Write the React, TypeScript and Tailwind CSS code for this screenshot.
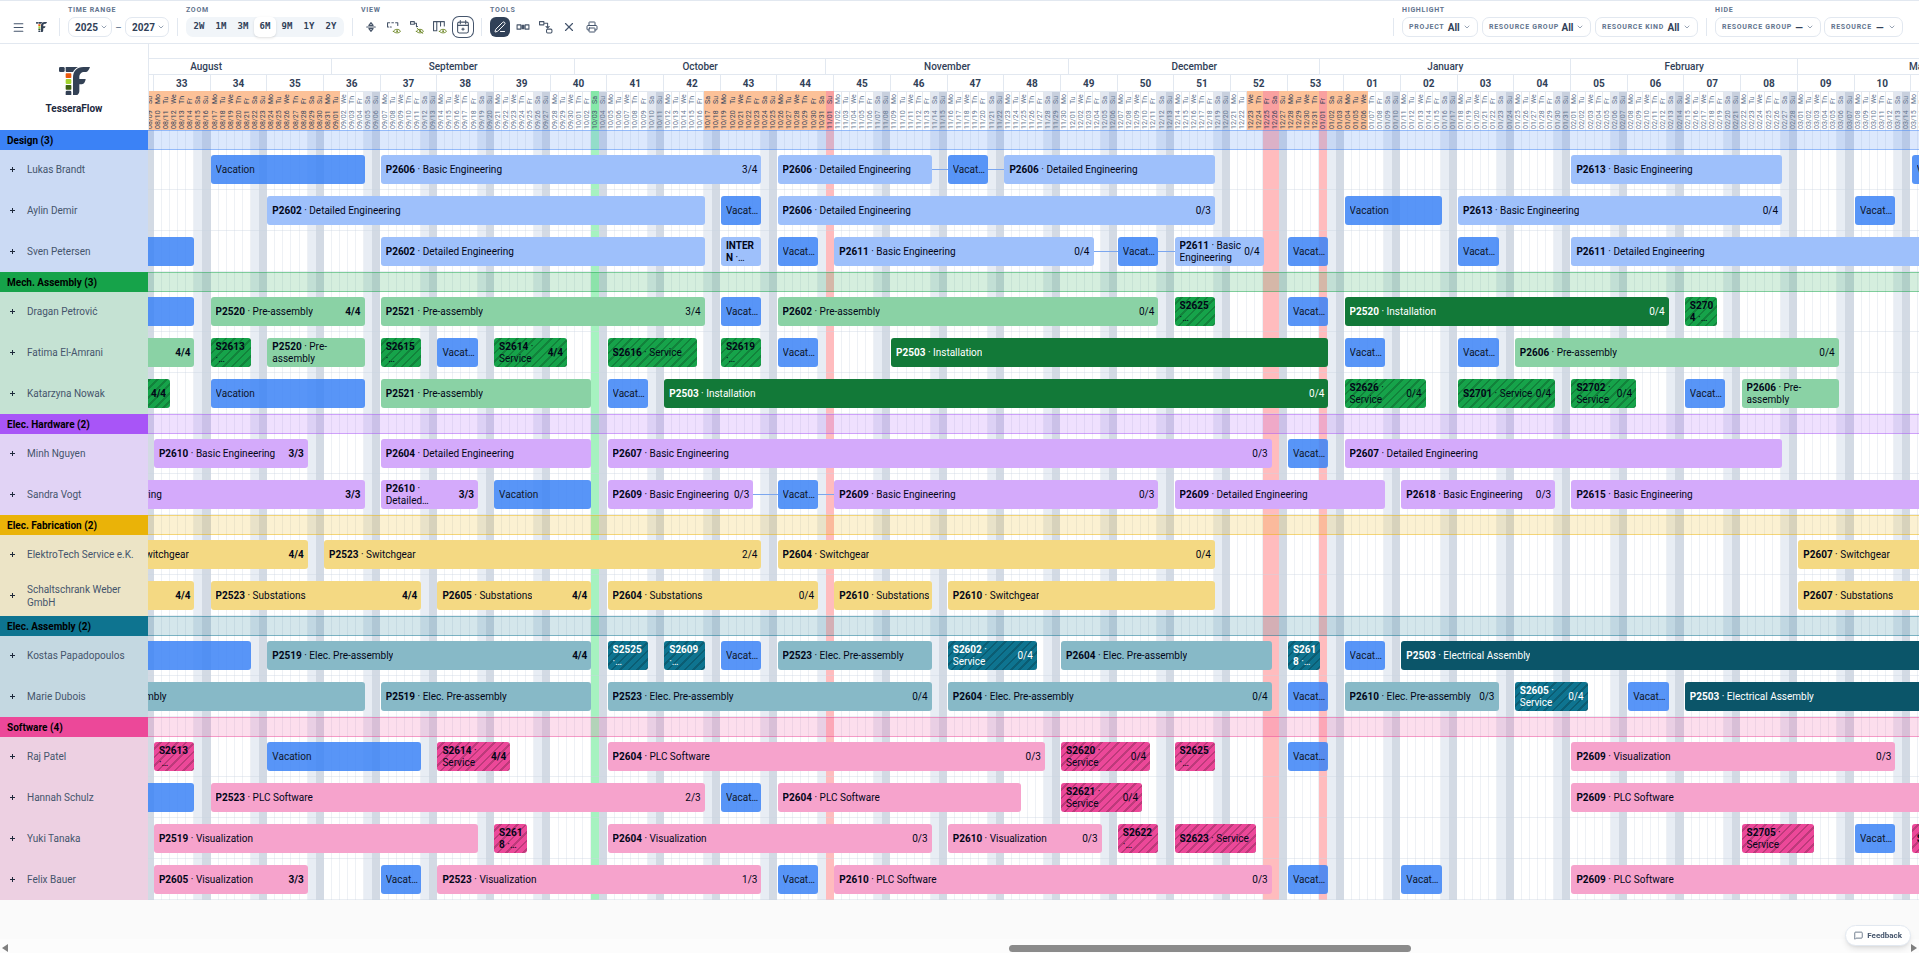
import React from "react";
import { ChevronDown, Menu, MessageSquare, PenLine, Printer, X } from "lucide-react";
import clsx from "clsx";

// The board is drawn on a canvas of whole months; only a window of it is visible.
const TOTAL_DAYS = 243;
const VISIBLE_DAYS = 218.64;
const SCROLLED_DAYS = 8.27;
const FIRST_MONDAY = 9; // 08/10, start of week 33
const START = Date.UTC(2026, 7, 1);

const pct = (days: number) => `${(days / TOTAL_DAYS) * 100}%`;

type Tone = "blue" | "green" | "purple" | "yellow" | "teal" | "pink";
type Kind = "vacation" | "project" | "install" | "service" | "link";

interface Bar {
  kind: Kind;
  start: number;
  days: number;
  code?: string;
  label?: string;
  progress?: string;
}

interface Resource {
  name: string;
  bars: Bar[];
}

interface Group {
  name: string;
  tone: Tone;
  resources: Resource[];
}

const at = (week: number) => FIRST_MONDAY + week * 7;

const vac = (week: number, days = 5): Bar => ({ kind: "vacation", start: at(week), days, label: "Vacation" });
const prj = (week: number, days: number, code: string, label: string, progress?: string): Bar => ({
  kind: "project",
  start: at(week),
  days,
  code,
  label,
  progress,
});
const ins = (week: number, days: number, code: string, label: string, progress?: string): Bar => ({
  kind: "install",
  start: at(week),
  days,
  code,
  label,
  progress,
});
const srv = (week: number, days: number, code: string, progress?: string): Bar => ({
  kind: "service",
  start: at(week),
  days,
  code,
  label: "Service",
  progress,
});
const link = (week: number, offset: number, days: number): Bar => ({ kind: "link", start: at(week) + offset, days });

const BE = "Basic Engineering";
const DE = "Detailed Engineering";
const PRE = "Pre-assembly";
const EPA = "Elec. Pre-assembly";
const EA = "Electrical Assembly";
const SW = "Switchgear";
const SUB = "Substations";
const PLC = "PLC Software";
const VIS = "Visualization";

const groups: Group[] = [
  {
    name: "Design",
    tone: "blue",
    resources: [
      {
        name: "Lukas Brandt",
        bars: [vac(1, 19), prj(4, 47, "P2606", BE, "3/4"), prj(11, 19, "P2606", DE), link(13, 5, 2), vac(14), link(14, 5, 2), prj(15, 26, "P2606", DE), prj(25, 26, "P2613", BE), vac(31)],
      },
      {
        name: "Aylin Demir",
        bars: [prj(2, 54, "P2602", DE), vac(10), prj(11, 54, "P2606", DE, "0/3"), vac(21, 12), prj(23, 40, "P2613", BE, "0/4"), vac(30)],
      },
      {
        name: "Sven Petersen",
        bars: [vac(-2, 19), prj(4, 40, "P2602", DE), prj(10, 5, "INTERN", "Internal"), vac(11), prj(12, 32, "P2611", BE, "0/4"), link(16, 4, 3), vac(17), link(17, 5, 2), prj(18, 11, "P2611", BE, "0/4"), vac(20), vac(23), prj(25, 60, "P2611", DE)],
      },
    ],
  },
  {
    name: "Mech. Assembly",
    tone: "green",
    resources: [
      {
        name: "Dragan Petrović",
        bars: [vac(-2, 19), prj(1, 19, "P2520", PRE, "4/4"), prj(4, 40, "P2521", PRE, "3/4"), vac(10), prj(11, 47, "P2602", PRE, "0/4"), srv(18, 5, "S2625"), vac(20), ins(21, 40, "P2520", "Installation", "0/4"), srv(27, 4, "S2704")],
      },
      {
        name: "Fatima El-Amrani",
        bars: [prj(-4, 33, "P2519", PRE, "4/4"), srv(1, 5, "S2613"), prj(2, 12, "P2520", PRE), srv(4, 5, "S2615"), vac(5), srv(6, 9, "S2614", "4/4"), srv(8, 11, "S2616"), srv(10, 5, "S2619"), vac(11), ins(13, 54, "P2503", "Installation"), vac(21), vac(23), prj(24, 40, "P2606", PRE, "0/4")],
      },
      {
        name: "Katarzyna Nowak",
        bars: [srv(-2, 16, "S2612", "4/4"), vac(1, 19), prj(4, 26, "P2521", PRE), vac(8), ins(9, 82, "P2503", "Installation", "0/4"), srv(21, 10, "S2626", "0/4"), srv(23, 12, "S2701", "0/4"), srv(25, 8, "S2702", "0/4"), vac(27), prj(28, 12, "P2606", PRE)],
      },
    ],
  },
  {
    name: "Elec. Hardware",
    tone: "purple",
    resources: [
      {
        name: "Minh Nguyen",
        bars: [prj(0, 19, "P2610", BE, "3/3"), prj(4, 26, "P2604", DE), prj(8, 82, "P2607", BE, "0/3"), vac(20), prj(21, 54, "P2607", DE)],
      },
      {
        name: "Sandra Vogt",
        bars: [prj(-2, 40, "P2604", BE, "3/3"), prj(4, 12, "P2610", DE, "3/3"), vac(6, 12), prj(8, 18, "P2609", BE, "0/3"), link(10, 4, 3), vac(11), link(11, 5, 2), prj(12, 40, "P2609", BE, "0/3"), prj(18, 26, "P2609", DE), prj(22, 19, "P2618", BE, "0/3"), prj(25, 60, "P2615", BE)],
      },
    ],
  },
  {
    name: "Elec. Fabrication",
    tone: "yellow",
    resources: [
      {
        name: "ElektroTech Service e.K.",
        bars: [prj(-1, 26, "P2519", SW, "4/4"), prj(3, 54, "P2523", SW, "2/4"), prj(11, 54, "P2604", SW, "0/4"), prj(29, 40, "P2607", SW)],
      },
      {
        name: "Schaltschrank Weber GmbH",
        bars: [prj(-4, 33, "P2519", SUB, "4/4"), prj(1, 26, "P2523", SUB, "4/4"), prj(5, 19, "P2605", SUB, "4/4"), prj(8, 26, "P2604", SUB, "0/4"), prj(12, 12, "P2610", SUB), prj(14, 33, "P2610", SW), prj(29, 40, "P2607", SUB)],
      },
    ],
  },
  {
    name: "Elec. Assembly",
    tone: "teal",
    resources: [
      {
        name: "Kostas Papadopoulos",
        bars: [vac(-2, 26), prj(2, 40, "P2519", EPA, "4/4"), srv(8, 5, "S2525"), srv(9, 5, "S2609"), vac(10), prj(11, 19, "P2523", EPA), srv(14, 11, "S2602", "0/4"), prj(16, 26, "P2604", EPA), srv(20, 4, "S2618"), vac(21), ins(22, 80, "P2503", EA)],
      },
      {
        name: "Marie Dubois",
        bars: [prj(-2, 40, "P2520", EPA), prj(4, 26, "P2519", EPA), prj(8, 40, "P2523", EPA, "0/4"), prj(14, 40, "P2604", EPA, "0/4"), vac(20), prj(21, 19, "P2610", EPA, "0/3"), srv(24, 9, "S2605", "0/4"), vac(26), ins(27, 60, "P2503", EA)],
      },
    ],
  },
  {
    name: "Software",
    tone: "pink",
    resources: [
      {
        name: "Raj Patel",
        bars: [srv(0, 5, "S2613"), vac(2, 19), srv(5, 9, "S2614", "4/4"), prj(8, 54, "P2604", PLC, "0/3"), srv(16, 11, "S2620", "0/4"), srv(18, 5, "S2625"), vac(20), prj(25, 40, "P2609", VIS, "0/3")],
      },
      {
        name: "Hannah Schulz",
        bars: [vac(-2, 19), prj(1, 61, "P2523", PLC, "2/3"), vac(10), prj(11, 30, "P2604", PLC), srv(16, 10, "S2621", "0/4"), prj(25, 60, "P2609", PLC)],
      },
      {
        name: "Yuki Tanaka",
        bars: [prj(0, 40, "P2519", VIS), srv(6, 4, "S2618"), prj(8, 40, "P2604", VIS, "0/3"), prj(14, 19, "P2610", VIS, "0/3"), srv(17, 5, "S2622"), srv(18, 10, "S2623"), srv(28, 9, "S2705"), vac(30), srv(31, 10, "S2706")],
      },
      {
        name: "Felix Bauer",
        bars: [prj(0, 19, "P2605", VIS, "3/3"), vac(4), prj(5, 40, "P2523", VIS, "1/3"), vac(11), prj(12, 54, "P2610", PLC, "0/3"), vac(20), vac(22), prj(25, 60, "P2609", PLC)],
      },
    ],
  },
];

const tones: Record<Tone, { head: string; side: string; band: string; project: string; install: string; service: string }> = {
  blue: {
    head: "bg-[#3b82f6]",
    side: "bg-[#cbdaf4]",
    band: "bg-[#3b82f6]/18 border-[#3b82f6]/45",
    project: "bg-[#9ec0fb]",
    install: "bg-[#1d4ed8] text-white",
    service: "bg-[#3b82f6]",
  },
  green: {
    head: "bg-[#16a34a]",
    side: "bg-[#c5e2d3]",
    band: "bg-[#16a34a]/18 border-[#16a34a]/45",
    project: "bg-[#8ad2a5]",
    install: "bg-[#127938] text-white",
    service: "bg-[#16a34a]",
  },
  purple: {
    head: "bg-[#a855f7]",
    side: "bg-[#e1d3f5]",
    band: "bg-[#a855f7]/18 border-[#a855f7]/45",
    project: "bg-[#d4aafb]",
    install: "bg-[#7e22ce] text-white",
    service: "bg-[#a855f7]",
  },
  yellow: {
    head: "bg-[#eab308]",
    side: "bg-[#ece4c6]",
    band: "bg-[#eab308]/18 border-[#eab308]/45",
    project: "bg-[#f4d983]",
    install: "bg-[#a16207] text-white",
    service: "bg-[#eab308]",
  },
  teal: {
    head: "bg-[#0e7490]",
    side: "bg-[#c4d8e1]",
    band: "bg-[#0e7490]/18 border-[#0e7490]/45",
    project: "bg-[#87b9c7]",
    install: "bg-[#0b5569] text-white",
    service: "bg-[#0e7490] text-white",
  },
  pink: {
    head: "bg-[#ec4899]",
    side: "bg-[#edd0e2]",
    band: "bg-[#ec4899]/18 border-[#ec4899]/45",
    project: "bg-[#f6a3cc]",
    install: "bg-[#be185d] text-white",
    service: "bg-[#ec4899]",
  },
};

const stripes = "bg-[repeating-linear-gradient(135deg,transparent_0,transparent_4px,rgba(0,0,0,0.2)_4px,rgba(0,0,0,0.2)_6px)]";

const weekdays = ["Su", "Mo", "Tu", "We", "Th", "Fr", "Sa"];

const pad = (n: number) => String(n).padStart(2, "0");

const inRange = (date: string, from: string, to: string) => date >= from && date <= to;

const days = Array.from({ length: TOTAL_DAYS }, (_, i) => {
  const d = new Date(START + i * 86400000);
  const date = `${pad(d.getUTCMonth() + 1)}/${pad(d.getUTCDate())}`;
  return {
    date,
    weekday: weekdays[d.getUTCDay()],
    saturday: d.getUTCDay() === 6,
    sunday: d.getUTCDay() === 0,
    today: date === "10/03",
    holiday: ["11/01", "12/25", "12/26", "01/01"].includes(date),
    school: inRange(date, "08/01", "09/01") || inRange(date, "10/17", "10/31") || date >= "12/23" || date <= "01/06",
  };
});

const months = [
  { name: "August", days: 31 },
  { name: "September", days: 30 },
  { name: "October", days: 31 },
  { name: "November", days: 30 },
  { name: "December", days: 31 },
  { name: "January", days: 31 },
  { name: "February", days: 28 },
  { name: "March", days: 31 },
];

const weeks = [
  { name: "31", days: 2 },
  ...Array.from({ length: 34 }, (_, i) => ({ name: pad(i + 32 > 53 ? i + 32 - 53 : i + 32), days: 7 })),
  { name: "13", days: 3 },
];

function Canvas({ className, children }: { className?: string; children: React.ReactNode }) {
  return (
    <div
      className={clsx("flex-none", className)}
      style={{
        width: `${(TOTAL_DAYS / VISIBLE_DAYS) * 100}%`,
        marginLeft: `${(-SCROLLED_DAYS / VISIBLE_DAYS) * 100}%`,
      }}
    >
      {children}
    </div>
  );
}

function Logo({ className }: { className?: string }) {
  return (
    <svg viewBox="0 0 93 86" className={className} aria-hidden="true">
      <rect x="0" y="0" width="17" height="15" rx="4" fill="#334155" />
      <rect x="20" y="19" width="17" height="14" rx="2" fill="#ea580c" />
      <rect x="20" y="36" width="17" height="15" rx="3" fill="#a3d42f" />
      <rect x="20" y="54" width="17" height="14" rx="2" fill="#3f6212" />
      <rect x="20" y="71" width="17" height="15" rx="4" fill="#334155" />
      <path d="M20 0H57C50 4 45 9 42 15H24C21 15 20 13 20 11Z" fill="#334155" />
      <path d="M93 0H73C53 0 42 13 42 32V86H47C56 86 61 80 61 72V52H66C73 52 78 48 80 36H61V31C61 21 67 15 76 15H80C86 15 90 9 93 0Z" fill="#334155" />
    </svg>
  );
}

function Eye({ off }: { off?: boolean }) {
  return (
    <g stroke="#65801b" strokeWidth="1.6" fill="none">
      <path d="M12 21C14 16 23 16 25 21C23 25 14 25 12 21Z" />
      <circle cx="18.5" cy="20.700" r="1" />
      {off && <path d="M13 15L24 25" />}
    </g>
  );
}

function Icon({ children }: { children: React.ReactNode }) {
  return (
    <svg viewBox="0 0 26 26" className="size-[14px]" fill="none" stroke="#475569" strokeWidth="2" strokeLinecap="round" strokeLinejoin="round" aria-hidden="true">
      {children}
    </svg>
  );
}

function ToolButton({ label, className, children }: { label: string; className?: string; children: React.ReactNode }) {
  return (
    <button type="button" aria-label={label} className={clsx("flex size-5 items-center justify-center rounded-[6px]", className ?? "text-slate-600")}>
      {children}
    </button>
  );
}

function Section({ title, children }: { title: string; children: React.ReactNode }) {
  return (
    <div className="flex flex-col gap-[3px]">
      <div className="text-[7px] leading-[8px] font-bold tracking-widest text-slate-500">{title}</div>
      <div className="flex h-5 items-center">{children}</div>
    </div>
  );
}

function Divider() {
  return <div className="mx-2 mb-[1px] h-[18px] w-px self-end bg-slate-200" />;
}

function YearSelect({ label, value }: { label: string; value: string }) {
  return (
    <label className="relative flex items-center">
      <select aria-label={label} defaultValue={value} className="h-5 w-[44px] appearance-none rounded-[7px] border border-slate-200 bg-white pl-[6px] text-[10px] font-bold text-slate-700">
        <option>2025</option>
        <option>2026</option>
        <option>2027</option>
      </select>
      <ChevronDown className="pointer-events-none absolute right-[4px] size-[8px] text-slate-500" />
    </label>
  );
}

function FilterButton({ label, value, className }: { label: string; value: string; className: string }) {
  return (
    <button type="button" className={clsx("flex h-5 items-center justify-between rounded-[7px] border border-slate-200 bg-white px-[6px]", className)}>
      <span className="text-[7px] font-bold tracking-widest text-slate-500">{label}</span>
      <span className="text-[10px] font-bold text-slate-700">{value}</span>
      <ChevronDown className="size-[8px] text-slate-500" />
    </button>
  );
}

function Toolbar() {
  return (
    <header className="flex h-[44px] items-end justify-between border-t border-b border-slate-200 bg-white pr-4 pb-[6px] pl-2">
      <div className="flex items-end">
        <ToolButton label="Menu">
          <Menu className="size-[13px]" />
        </ToolButton>
        <a href="#" aria-label="TesseraFlow" className="mr-1 ml-2 flex h-5 items-center">
          <Logo className="w-[11px]" />
        </a>
        <Divider />
        <Section title="TIME RANGE">
          <YearSelect label="From year" value="2025" />
          <span className="w-[13px] text-center text-[10px] text-slate-500">–</span>
          <YearSelect label="To year" value="2027" />
        </Section>
        <Divider />
        <Section title="ZOOM">
          <div className="flex h-5 items-center rounded-[7px] bg-slate-100 px-[2px] font-['DejaVu_Sans_Mono',monospace]">
            {["2W", "1M", "3M", "6M", "9M", "1Y", "2Y"].map((z) => (
              <button key={z} type="button" className={clsx("h-5 w-[22px] rounded-[5px] text-[9px] font-bold text-slate-700", z === "6M" && "bg-white shadow-sm")}>
                {z}
              </button>
            ))}
          </div>
        </Section>
        <Divider />
        <Section title="VIEW">
          <div className="flex gap-[3px]">
            <ToolButton label="Expand rows">
              <Icon>
                <path d="M9 10L13 5L17 10ZM9 16L13 21L17 16ZM5 13H21" />
              </Icon>
            </ToolButton>
            <ToolButton label="Show bars">
              <Icon>
                <path d="M3 13H1V5H5M9 5H12M16 5H20V10M6 13H8" />
                <Eye />
              </Icon>
            </ToolButton>
            <ToolButton label="Hide links">
              <Icon>
                <path d="M1 3H8V8H1ZM8 6H12V12H14" />
                <Eye off />
              </Icon>
            </ToolButton>
            <ToolButton label="Show columns">
              <Icon>
                <path d="M7 3V20H1V3H21V11M14 3V11" />
                <Eye />
              </Icon>
            </ToolButton>
            <ToolButton label="Go to today" className="ring-1 ring-slate-600">
              <Icon>
                <rect x="3" y="4" width="20" height="20" rx="3" />
                <path d="M8 1V7M18 1V7M3 10H23M13 15V19M11 17H15" />
              </Icon>
            </ToolButton>
          </div>
        </Section>
        <Divider />
        <Section title="TOOLS">
          <div className="flex gap-[3px]">
            <ToolButton label="Edit" className="bg-slate-700 text-white">
              <PenLine className="size-[12px]" />
            </ToolButton>
            <ToolButton label="Split bar">
              <Icon>
                <path d="M2 9H9V17H2ZM17 9H24V17H17Z" />
                <path d="M11 10H15V16H11Z" fill="#475569" />
              </Icon>
            </ToolButton>
            <ToolButton label="Connect">
              <Icon>
                <path d="M1 3H9V9H1ZM9 6H16V14M13 12L16 15L19 12" />
                <rect x="14" y="17" width="10" height="7" rx="2" />
              </Icon>
            </ToolButton>
            <ToolButton label="Delete">
              <X className="size-[14px]" />
            </ToolButton>
            <ToolButton label="Print">
              <Printer className="size-[12px]" />
            </ToolButton>
          </div>
        </Section>
      </div>
      <div className="flex items-end">
        <Divider />
        <Section title="HIGHLIGHT">
          <div className="flex gap-[4px]">
            <FilterButton label="PROJECT" value="All" className="w-[76px]" />
            <FilterButton label="RESOURCE GROUP" value="All" className="w-[109px]" />
            <FilterButton label="RESOURCE KIND" value="All" className="w-[103px]" />
          </div>
        </Section>
        <Divider />
        <Section title="HIDE">
          <div className="flex gap-[3px]">
            <FilterButton label="RESOURCE GROUP" value="—" className="w-[106px]" />
            <FilterButton label="RESOURCE" value="—" className="w-[79px]" />
          </div>
        </Section>
      </div>
    </header>
  );
}

function CalendarHeader() {
  return (
    <div className="flex bg-white">
      <div className="relative z-10 flex w-[148px] flex-none flex-col items-center justify-center gap-[8px] pt-[8px] shadow-[1px_0_0_#e2e8f0]">
        <Logo className="w-[31px]" />
        <div className="text-[10px] leading-[12px] font-bold text-slate-800">TesseraFlow</div>
      </div>
      <div className="flex min-w-0 flex-1 overflow-hidden">
        <Canvas className="pt-[14px]">
          <div className="flex h-4 border-t border-slate-200">
            {months.map((m) => (
              <div key={m.name} className="flex items-center justify-center border-r border-slate-200 text-[10px] font-medium text-slate-700" style={{ width: pct(m.days) }}>
                {m.name}
              </div>
            ))}
          </div>
          <div className="flex h-[17px] border-t border-slate-200">
            {weeks.map((w, i) => (
              <div key={i} className="flex items-center justify-center border-r border-slate-200 text-[10px] font-bold text-slate-700" style={{ width: pct(w.days) }}>
                {w.name}
              </div>
            ))}
          </div>
          <div className="flex h-[39px]">
            {days.map((d) => (
              <div
                key={d.date}
                className={clsx(
                  "flex flex-col items-center border-t pt-px text-[7px] leading-[8px]",
                  d.today
                    ? "border-[#86e8a9] bg-[#86e8a9] text-slate-600"
                    : d.holiday
                      ? "border-[#f9a0a0] bg-[#f9a0a0] text-slate-700"
                      : d.school
                        ? "border-[#fcc198] bg-[#fcc198] text-slate-700"
                        : d.sunday
                          ? "border-slate-200 bg-[#c8d0de] text-slate-500"
                          : d.saturday
                            ? "border-slate-200 bg-[#e2e7f0] text-slate-500"
                            : "border-slate-200 text-slate-500 shadow-[inset_-1px_0_0_#e5e7eb]"
                )}
                style={{ width: pct(1) }}
              >
                <span className="h-[11px] rotate-180 [writing-mode:vertical-rl]">{d.weekday}</span>
                <span className="h-[25px] rotate-180 [writing-mode:vertical-rl]">{d.date}</span>
              </div>
            ))}
          </div>
        </Canvas>
      </div>
    </div>
  );
}

function BarItem({ bar, tone }: { bar: Bar; tone: Tone }) {
  const place = { left: pct(bar.start), width: pct(bar.days) };

  if (bar.kind === "link") {
    return <div className="absolute top-[20px] h-px bg-[#7ba6ee]" style={place} />;
  }

  const done = bar.progress && bar.progress[0] === bar.progress[2];

  return (
    <div
      className={clsx(
        "absolute top-[6px] flex h-[29px] items-center justify-between gap-px overflow-hidden rounded-[3px] pl-[5px] text-[10px] leading-[12px]",
        bar.progress ? "pr-[4px]" : "pr-[2px]",
        bar.kind === "vacation" && "bg-[#3b82f6]/85 text-slate-900",
        bar.kind === "project" && tones[tone].project,
        bar.kind === "install" && tones[tone].install,
        bar.kind === "service" && [tones[tone].service, stripes]
      )}
      style={place}
    >
      {bar.kind === "vacation" ? (
        <span className="truncate">{bar.label}</span>
      ) : (
        <span className="line-clamp-2 min-w-0 [overflow-wrap:anywhere]">
          <b className="font-bold">{bar.code}</b> · {bar.label}
        </span>
      )}
      {bar.progress && <span className={clsx("flex-none", done && "font-bold")}>{bar.progress}</span>}
    </div>
  );
}

function Board() {
  return (
    <div className="relative">
      <div className="absolute inset-y-0 right-0 left-[148px] flex overflow-hidden bg-white">
        <Canvas className="flex">
          {days.map((d) => (
            <div
              key={d.date}
              className={clsx(
                d.today
                  ? "bg-[#a6f2c0]"
                  : d.holiday
                    ? "bg-[#ffbcbe]"
                    : d.sunday
                      ? "bg-[#d3dae4]"
                      : d.saturday
                        ? "bg-[#e8edf4]"
                        : "shadow-[inset_-1px_0_0_#eef1f5]"
              )}
              style={{ width: pct(1) }}
            />
          ))}
        </Canvas>
      </div>
      {groups.map((g) => (
        <section key={g.name} className="relative">
          <div className="relative z-10 -mb-px flex h-5">
            <h2 className={clsx("flex w-[148px] flex-none items-center pl-[7px] text-[10px] font-bold text-black", tones[g.tone].head)}>
              {g.name} ({g.resources.length})
            </h2>
            <div className={clsx("flex-1 border-y", tones[g.tone].band)} />
          </div>
          {g.resources.map((r) => (
            <div key={r.name} className="flex h-[41px]">
              <div className={clsx("flex w-[148px] flex-none items-center pl-[10px] text-[10px] leading-[13px] text-slate-600", tones[g.tone].side)}>
                <button type="button" aria-label={`Expand ${r.name}`} className="mr-[12px] flex-none">
                  <svg viewBox="0 0 5 5" className="size-[5px]" aria-hidden="true">
                    <path d="M2 0H3V2H5V3H3V5H2V3H0V2H2Z" fill="#1e293b" />
                  </svg>
                </button>
                <span className="pr-1">{r.name}</span>
              </div>
              <div className="flex min-w-0 flex-1 overflow-hidden border-b border-slate-300/40">
                <Canvas className="relative">
                  {r.bars.map((b, i) => (
                    <BarItem key={i} bar={b} tone={g.tone} />
                  ))}
                </Canvas>
              </div>
            </div>
          ))}
        </section>
      ))}
    </div>
  );
}

function ScrollTrack() {
  return (
    <div className="mt-auto flex h-[14px] items-end justify-between bg-[#fcfcfc] px-[2px] pb-px">
      <svg viewBox="0 0 6 8" className="h-[8px] w-[6px]" aria-hidden="true">
        <path d="M6 0V8L0 4Z" fill="#7f7f7f" />
      </svg>
      <div className="flex flex-1 px-[4px]">
        <div className="grow-[1000]" />
        <div className="h-[7px] grow-[403] rounded-full bg-[#8b8b8b]" />
        <div className="grow-[498]" />
      </div>
      <svg viewBox="0 0 6 8" className="h-[8px] w-[6px]" aria-hidden="true">
        <path d="M0 0V8L6 4Z" fill="#7f7f7f" />
      </svg>
    </div>
  );
}

export default function App() {
  return (
    <div className="flex min-h-screen flex-col bg-[#fafafa] font-[Roboto,sans-serif] text-slate-950">
      <Toolbar />
      <CalendarHeader />
      <Board />
      <ScrollTrack />
      <button type="button" className="fixed right-2 bottom-[7px] flex h-[21px] items-center gap-[4px] rounded-full border border-slate-200 bg-white px-[8px] text-[8px] font-bold text-slate-600 shadow-md">
        <MessageSquare className="size-[9px]" />
        Feedback
      </button>
    </div>
  );
}
